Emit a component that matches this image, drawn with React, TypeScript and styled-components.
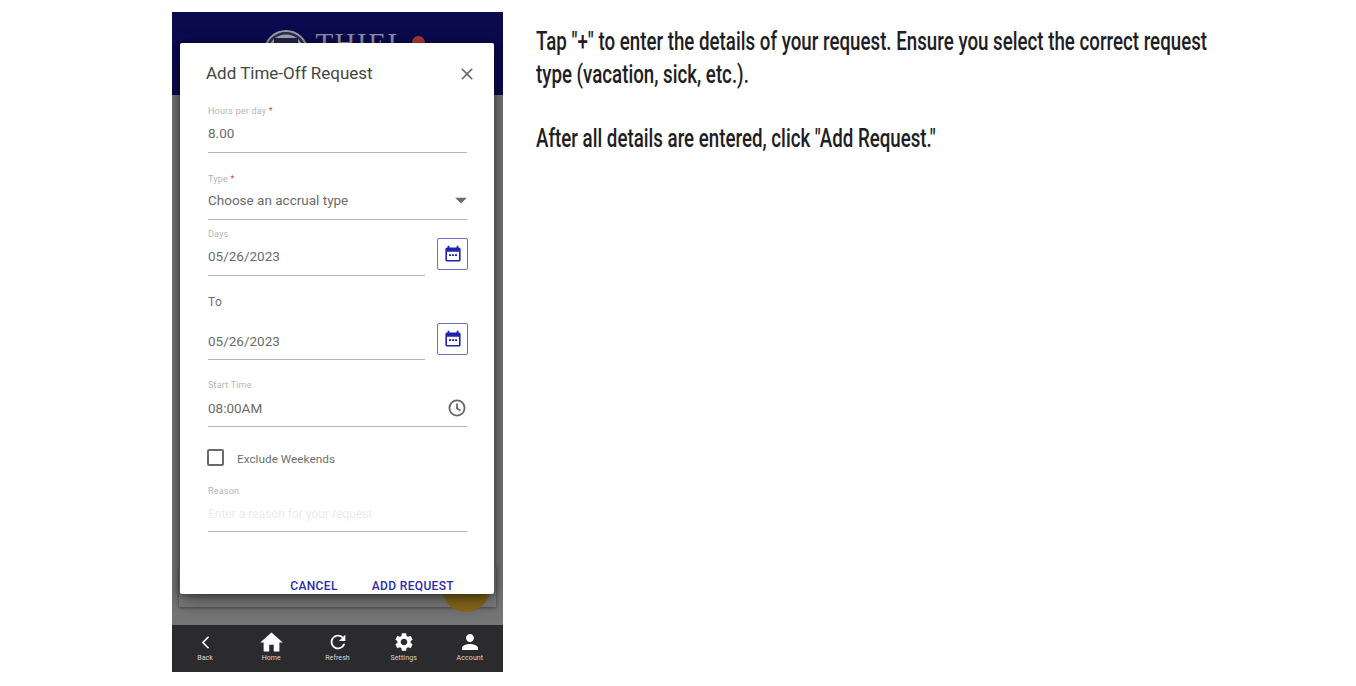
import React from "react";
import styled, { createGlobalStyle } from "styled-components";
import {
  MdArrowBackIosNew,
  MdArrowDropDown,
  MdClose,
  MdHome,
  MdPerson,
  MdRefresh,
  MdSettings,
} from "react-icons/md";

const GlobalStyle = createGlobalStyle`
  html, body {
    margin: 0;
    background: #fff;
    font-family: Roboto, "Liberation Sans", sans-serif;
  }
`;

const Page = styled.div`
  width: 1356px;
  height: 686px;
  display: flex;
  align-items: flex-start;
  padding: 12px 0 0 172px;
  box-sizing: border-box;
  overflow: hidden;
`;

const Phone = styled.div`
  position: relative;
  width: 331px;
  height: 660px;
  flex: none;
  display: flex;
  flex-direction: column;
  overflow: hidden;
`;

const TopBar = styled.header`
  height: 83px;
  background: #0a0a4e;
  display: flex;
  justify-content: center;
  padding: 17px 4px 0 0;
  gap: 7px;
  box-sizing: border-box;
`;

const LogoText = styled.span`
  font-family: "Liberation Serif", serif;
  font-size: 29px;
  line-height: 28px;
  letter-spacing: 1.5px;
  color: #8d8da6;
`;

const LogoDot = styled.span`
  position: absolute;
  left: 240px;
  top: 24px;
  width: 13px;
  height: 13px;
  border-radius: 50%;
  background: #a8392f;
`;

const Body = styled.main`
  flex: 1;
  background: #757575;
  display: flex;
  flex-direction: column;
  justify-content: flex-end;
  padding: 0 7px 18px 7px;
`;

const BackCard = styled.div`
  height: 40px;
  background: #7c7c7c;
  box-shadow: 0 1px 3px rgba(0, 0, 0, 0.4);
`;

const Fab = styled.div`
  position: absolute;
  left: 270px;
  top: 552px;
  width: 48px;
  height: 48px;
  border-radius: 50%;
  background: #8a691d;
`;

const TabBar = styled.nav`
  height: 47px;
  background: #2b2b2d;
  display: flex;
`;

const Tab = styled.div`
  flex: 1;
  display: flex;
  flex-direction: column;
  align-items: center;
  padding-top: 5px;
  font-size: 7px;
  line-height: 9px;
  letter-spacing: 0.1px;
  color: #d8d8d8;
  svg {
    display: block;
    color: #fff;
  }
`;

const IconSlot = styled.div`
  height: 24px;
  display: flex;
  align-items: center;
  justify-content: center;
`;

const Dialog = styled.section`
  position: absolute;
  left: 8px;
  top: 31px;
  width: 314px;
  height: 551px;
  background: #fff;
  border-radius: 2px;
  box-shadow: 0 6px 20px rgba(0, 0, 0, 0.45), 0 2px 6px rgba(0, 0, 0, 0.3);
  display: flex;
  flex-direction: column;
  padding: 0 27px 0 28px;
  box-sizing: border-box;
`;

const DialogHead = styled.div`
  height: 61px;
  margin-left: -2px;
  display: flex;
  align-items: center;
  justify-content: space-between;
  color: #6a6a6a;
  svg {
    margin-right: -10px;
  }
`;

const DialogTitle = styled.h2`
  margin: 0 0 1px;
  font-size: 17px;
  font-weight: 400;
  color: #454545;
`;

const Field = styled.div<{ $mt?: number }>`
  margin-top: ${(p) => p.$mt ?? 0}px;
`;

const DateField = styled(Field)`
  flex: 1;
  min-width: 0;
`;

const FieldLabel = styled.label`
  display: block;
  padding-top: 1px;
  margin-bottom: -1px;
  font-size: 9px;
  line-height: 12px;
  letter-spacing: 0.2px;
  color: #b4b4b4;
  white-space: nowrap;
  b {
    font-weight: 400;
    color: #d45050;
  }
`;

const InputRow = styled.div<{ $pt: number; $pb?: number }>`
  display: flex;
  align-items: center;
  justify-content: space-between;
  height: 20px;
  padding: ${(p) => p.$pt}px 0 ${(p) => p.$pb ?? 9}px;
  border-bottom: 1px solid #b4b4b4;
  font-size: 13.5px;
  line-height: 20px;
  color: #6b6b6b;
  white-space: nowrap;
`;

const Placeholder = styled.span`
  font-size: 12px;
  color: #ececec;
`;

const DateRow = styled.div<{ $mt?: number }>`
  display: flex;
  align-items: flex-start;
  gap: 12px;
  margin: ${(p) => p.$mt ?? 0}px -1px 0 0;
`;

const DateButton = styled.div<{ $mt: number }>`
  flex: none;
  width: 31px;
  height: 32px;
  margin-top: ${(p) => p.$mt}px;
  border: 1px solid #6e6ecb;
  border-radius: 2px;
  box-sizing: border-box;
  display: flex;
  align-items: center;
  justify-content: center;
`;

const PlainLabel = styled.div`
  margin-top: 18px;
  font-size: 12px;
  line-height: 16px;
  letter-spacing: 0.3px;
  color: #6e6e6e;
`;

const CheckRow = styled.div`
  display: flex;
  align-items: center;
  gap: 13px;
  margin-top: 22px;
  margin-left: -1px;
  font-size: 11.8px;
  line-height: 13px;
  color: #6f6f6f;
`;

const CheckLabel = styled.span`
  margin-top: 4px;
`;

const CheckBox = styled.span`
  width: 17px;
  height: 17px;
  border: 2px solid #6a6a6a;
  border-radius: 2px;
  box-sizing: border-box;
`;

const Footer = styled.div`
  margin-top: auto;
  margin-right: 13px;
  padding-bottom: 2px;
  display: flex;
  justify-content: flex-end;
  gap: 34px;
`;

const TextButton = styled.span`
  font-size: 12px;
  line-height: 12px;
  font-weight: 500;
  letter-spacing: 0.35px;
  color: #2b2bab;
`;

const Notes = styled.article`
  margin: 13px 0 0 33px;
  width: 680px;
  color: #1e1e24;
  font-size: 26px;
  line-height: 33px;
  font-weight: 500;
`;

const NoteLine = styled.div<{ $mt?: number }>`
  margin-top: ${(p) => p.$mt ?? 0}px;
  white-space: nowrap;
  transform: scaleX(0.72);
  transform-origin: left center;
`;

const CalendarIcon = () => (
  <svg width="18" height="18" viewBox="0 0 18 18" fill="none">
    <path d="M4.500 0.800v3M13.500 0.800v3" stroke="#2222b0" strokeWidth="1.800" />
    <path
      d="M3 2.500h12a1.600 1.600 0 0 1 1.600 1.600v10.900a1.600 1.600 0 0 1-1.600 1.600H3A1.600 1.600 0 0 1 1.400 15V4.100A1.600 1.600 0 0 1 3 2.500ZM3 6.800V15h12V6.800Z"
      fill="#2222b0"
      fillRule="evenodd"
    />
    <path d="M5 9.200h2v1.800H5ZM8 9.200h2v1.800H8ZM11 9.200h2v1.800h-2Z" fill="#2222b0" />
  </svg>
);

const ClockIcon = () => (
  <svg width="20" height="20" viewBox="0 0 20 20" fill="none" stroke="#666" strokeWidth="1.800">
    <circle cx="10" cy="10" r="7.600" />
    <path d="M10 5.500V10.400l3.500 2.100" />
  </svg>
);

const LogoMark = () => (
  <svg width="44" height="44" viewBox="0 0 44 44">
    <ellipse cx="22" cy="22" rx="21" ry="20" fill="#2a2a50" stroke="#9a9aa6" strokeWidth="2" />
    <ellipse cx="22" cy="22" rx="17.500" ry="16.500" fill="#a3a3aa" />
    <path d="M10 9h24v5h-9v22h-6V14h-9Z" fill="#23234a" />
  </svg>
);

const tabs = [
  { label: "Back", icon: <MdArrowBackIosNew size={15} /> },
  { label: "Home", icon: <MdHome size={27} /> },
  { label: "Refresh", icon: <MdRefresh size={22} /> },
  { label: "Settings", icon: <MdSettings size={22} /> },
  { label: "Account", icon: <MdPerson size={24} /> },
];

export default function App() {
  return (
    <Page>
      <GlobalStyle />
      <Phone>
        <TopBar>
          <LogoMark />
          <LogoText>THIEL</LogoText>
          <LogoDot />
        </TopBar>
        <Body>
          <BackCard />
        </Body>
        <Fab />
        <TabBar>
          {tabs.map((t) => (
            <Tab key={t.label}>
              <IconSlot>{t.icon}</IconSlot>
              {t.label}
            </Tab>
          ))}
        </TabBar>
        <Dialog>
          <DialogHead>
            <DialogTitle>Add Time-Off Request</DialogTitle>
            <MdClose size={20} />
          </DialogHead>
          <Field>
            <FieldLabel>
              Hours per day <b>*</b>
            </FieldLabel>
            <InputRow $pt={7}>8.00</InputRow>
          </Field>
          <Field $mt={19}>
            <FieldLabel>
              Type <b>*</b>
            </FieldLabel>
            <InputRow $pt={6}>
              Choose an accrual type
              <MdArrowDropDown size={28} style={{ marginRight: -8 }} />
            </InputRow>
          </Field>
          <DateRow $mt={7}>
            <DateField>
              <FieldLabel>Days</FieldLabel>
              <InputRow $pt={7}>05/26/2023</InputRow>
            </DateField>
            <DateButton $mt={11}>
              <CalendarIcon />
            </DateButton>
          </DateRow>
          <PlainLabel>To</PlainLabel>
          <DateRow>
            <DateField>
              <InputRow $pt={21} $pb={8}>
                05/26/2023
              </InputRow>
            </DateField>
            <DateButton $mt={13}>
              <CalendarIcon />
            </DateButton>
          </DateRow>
          <Field $mt={18}>
            <FieldLabel>Start Time</FieldLabel>
            <InputRow $pt={8} $pb={8}>
              08:00AM
              <ClockIcon />
            </InputRow>
          </Field>
          <CheckRow>
            <CheckBox />
            <CheckLabel>Exclude Weekends</CheckLabel>
          </CheckRow>
          <Field $mt={18}>
            <FieldLabel>Reason</FieldLabel>
            <InputRow $pt={8} $pb={7}>
              <Placeholder>Enter a reason for your request</Placeholder>
            </InputRow>
          </Field>
          <Footer>
            <TextButton>CANCEL</TextButton>
            <TextButton>ADD REQUEST</TextButton>
          </Footer>
        </Dialog>
      </Phone>
      <Notes>
        <NoteLine>Tap "+" to enter the details of your request. Ensure you select the correct request</NoteLine>
        <NoteLine>type (vacation, sick, etc.).</NoteLine>
        <NoteLine $mt={31}>After all details are entered, click "Add Request."</NoteLine>
      </Notes>
    </Page>
  );
}
